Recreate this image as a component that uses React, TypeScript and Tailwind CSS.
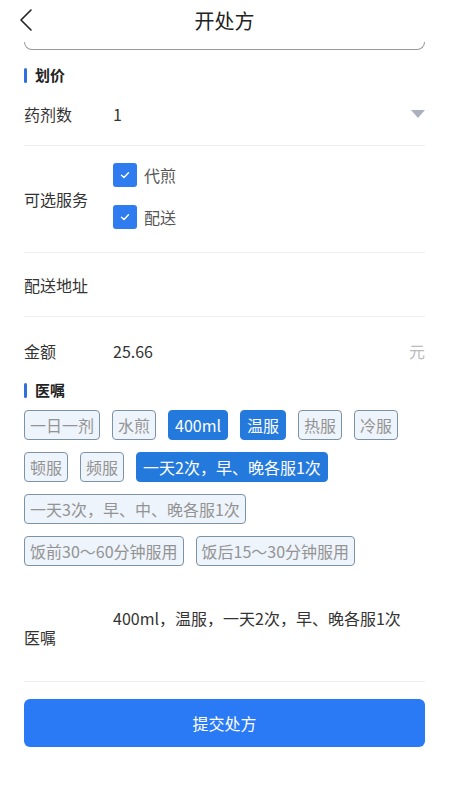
import React from "react";

const tags: { t: string; on?: boolean }[][] = [
  [{ t: "一日一剂" }, { t: "水煎" }, { t: "400ml", on: true }, { t: "温服", on: true }, { t: "热服" }, { t: "冷服" }],
  [{ t: "顿服" }, { t: "频服" }, { t: "一天2次，早、晚各服1次", on: true }],
  [{ t: "一天3次，早、中、晚各服1次" }],
  [{ t: "饭前30～60分钟服用" }, { t: "饭后15～30分钟服用" }],
];

function Check() {
  return (
    <span className="w-6 h-6 rounded-[3px] bg-[#2f7cf0] flex items-center justify-center">
      <svg width="12" height="12" viewBox="0 0 12 12" fill="none">
        <path d="M2.5 6.2 L5 8.5 L9.5 3.8" stroke="white" strokeWidth="1.4" strokeLinecap="round" strokeLinejoin="round" />
      </svg>
    </span>
  );
}

function Title({ children }: { children: React.ReactNode }) {
  return (
    <div className="flex items-center gap-2 h-[30px]">
      <span className="w-[3px] h-[15px] rounded-sm bg-[#2f6fe0]" />
      <span className="text-[15px] font-bold text-[#222]">{children}</span>
    </div>
  );
}

export default function App() {
  return (
    <div
      className="w-[449px] h-[800px] bg-white text-[#333] overflow-hidden"
      style={{ fontFamily: '"Noto Sans CJK SC", "Noto Sans", sans-serif' }}
    >
      <div className="relative h-[42px] flex items-center justify-center">
        <svg className="absolute left-[18px] top-[8px]" width="16" height="24" viewBox="0 0 16 24" fill="none">
          <path d="M13 2 L3 12 L13 22" stroke="#222" strokeWidth="1.6" strokeLinecap="round" strokeLinejoin="round" />
        </svg>
        <span className="text-[20px] text-[#222]">开处方</span>
      </div>
      <div className="mx-6 h-[8px] border-x border-b border-[#999] rounded-b-[8px]" />
      <div className="px-6">
        <div className="mt-[10px]">
          <Title>划价</Title>
        </div>
        <div className="flex items-center h-[56px] pb-[8px] border-b border-[#eee] text-[16px]">
          <span className="w-[89px]">药剂数</span>
          <span className="flex-1">1</span>
          <svg width="14" height="10" viewBox="0 0 14 10">
            <path d="M0 1 L14 1 L7 9 Z" fill="#aab0bc" />
          </svg>
        </div>
        <div className="flex items-center h-[107px] border-b border-[#eee] text-[16px]">
          <span className="w-[89px]">可选服务</span>
          <div className="flex flex-col gap-[18px] mb-[6px]">
            <div className="flex items-center gap-[7px]">
              <Check />
              <span className="text-[#555]">代煎</span>
            </div>
            <div className="flex items-center gap-[7px]">
              <Check />
              <span className="text-[#555]">配送</span>
            </div>
          </div>
        </div>
        <div className="flex items-center h-[64px] border-b border-[#eee] text-[16px]">
          <span>配送地址</span>
        </div>
        <div className="flex items-center h-[58px] pt-[9px] text-[16px]">
          <span className="w-[89px]">金额</span>
          <span className="flex-1">25.66</span>
          <span className="text-[#bbb]">元</span>
        </div>
        <Title>医嘱</Title>
        <div className="flex flex-col gap-3 mt-[5px]">
          {tags.map((row, i) => (
            <div key={i} className="flex gap-3">
              {row.map((x) => (
                <span
                  key={x.t}
                  className={
                    x.on
                      ? "h-[30px] px-[6px] flex items-center rounded-[4px] border border-[#2479dc] bg-[#2479dc] text-white text-[16px]"
                      : "h-[30px] px-[5px] flex items-center rounded-[4px] border border-[#7d93a5] bg-[#eef4fb] text-[#939393] text-[16px]"
                  }
                >
                  {x.t}
                </span>
              ))}
            </div>
          ))}
        </div>
        <div className="flex h-[116px] border-b border-[#eee] text-[16px]">
          <span className="w-[89px] pt-[59px]">医嘱</span>
          <span className="pt-[40px]">400ml，温服，一天2次，早、晚各服1次</span>
        </div>
        <button className="mt-[17px] w-full h-[48px] rounded-[6px] bg-[#2b7af5] text-white text-[16px]">
          提交处方
        </button>
      </div>
    </div>
  );
}
